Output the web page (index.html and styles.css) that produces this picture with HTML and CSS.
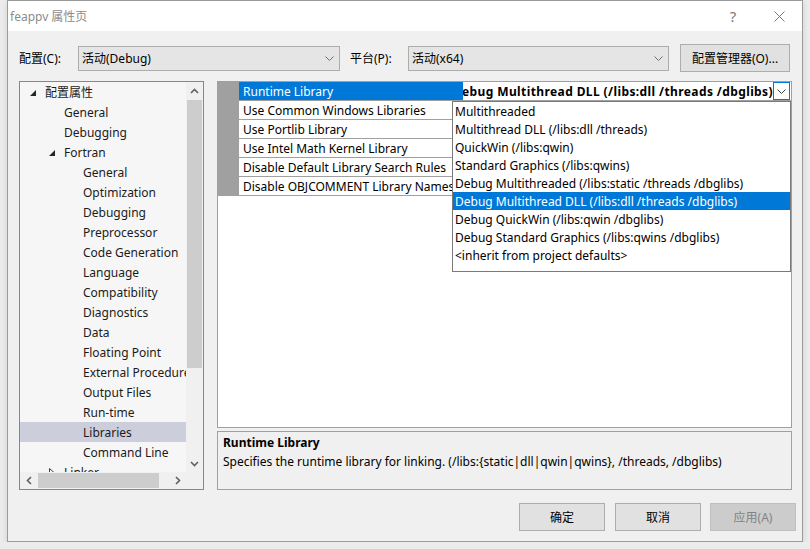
FILE: index.html
```html
<!DOCTYPE html>
<html lang="zh-CN">
<head>
<meta charset="utf-8">
<title>feappv 属性页</title>
<link rel="stylesheet" href="styles.css">
</head>
<body>
<div class="window">
  <div class="titlebar">
    <span class="title">feappv 属性页</span>
    <span class="help">?</span>
    <svg class="close" width="11" height="11" viewBox="0 0 11 11"><path d="M0.5 0.5 L10.5 10.5 M10.5 0.5 L0.5 10.5" stroke="#7a7a7a" stroke-width="1" fill="none"/></svg>
  </div>

  <div class="config-row">
    <span class="lbl lbl-config">配置(C):</span>
    <div class="combo combo-config">
      <span>活动(Debug)</span>
      <svg class="chev" width="9" height="5" viewBox="0 0 9 5"><polyline points="0.5,0.5 4.5,4.5 8.5,0.5" fill="none" stroke="#707070" stroke-width="1"/></svg>
    </div>
    <span class="lbl lbl-platform">平台(P):</span>
    <div class="combo combo-platform">
      <span>活动(x64)</span>
      <svg class="chev" width="9" height="5" viewBox="0 0 9 5"><polyline points="0.5,0.5 4.5,4.5 8.5,0.5" fill="none" stroke="#707070" stroke-width="1"/></svg>
    </div>
    <button class="btn btn-manager">配置管理器(O)...</button>
  </div>

  <div class="main">
    <div class="tree">
      <div class="tree-list">
        <div class="row l0"><span class="exp"><svg class="tri" width="6" height="6" viewBox="0 0 6 6"><polygon points="6,0 6,6 0,6" fill="#262626"/></svg></span><span>配置属性</span></div>
        <div class="row l1"><span class="exp"></span><span>General</span></div>
        <div class="row l1"><span class="exp"></span><span>Debugging</span></div>
        <div class="row l1"><span class="exp"><svg class="tri" width="6" height="6" viewBox="0 0 6 6"><polygon points="6,0 6,6 0,6" fill="#262626"/></svg></span><span>Fortran</span></div>
        <div class="row l2"><span class="exp"></span><span>General</span></div>
        <div class="row l2"><span class="exp"></span><span>Optimization</span></div>
        <div class="row l2"><span class="exp"></span><span>Debugging</span></div>
        <div class="row l2"><span class="exp"></span><span>Preprocessor</span></div>
        <div class="row l2"><span class="exp"></span><span>Code Generation</span></div>
        <div class="row l2"><span class="exp"></span><span>Language</span></div>
        <div class="row l2"><span class="exp"></span><span>Compatibility</span></div>
        <div class="row l2"><span class="exp"></span><span>Diagnostics</span></div>
        <div class="row l2"><span class="exp"></span><span>Data</span></div>
        <div class="row l2"><span class="exp"></span><span>Floating Point</span></div>
        <div class="row l2"><span class="exp"></span><span>External Procedures</span></div>
        <div class="row l2"><span class="exp"></span><span>Output Files</span></div>
        <div class="row l2"><span class="exp"></span><span>Run-time</span></div>
        <div class="row l2 sel"><span class="exp"></span><span>Libraries</span></div>
        <div class="row l2"><span class="exp"></span><span>Command Line</span></div>
        <div class="row l1"><span class="exp"><svg class="tri-c" width="6" height="9" viewBox="0 0 6 9"><polygon points="0.5,0.5 5,4.5 0.5,8.5" fill="none" stroke="#404040" stroke-width="1"/></svg></span><span>Linker</span></div>
      </div>
      <div class="vscroll">
        <div class="sbtn"><svg width="9" height="6" viewBox="0 0 9 6"><polyline points="1,5 4.5,1.5 8,5" fill="none" stroke="#606060" stroke-width="1.6"/></svg></div>
        <div class="vthumb"></div>
        <div class="sfill"></div>
        <div class="sbtn"><svg width="9" height="6" viewBox="0 0 9 6"><polyline points="1,1 4.5,4.5 8,1" fill="none" stroke="#606060" stroke-width="1.6"/></svg></div>
      </div>
      <div class="hscroll">
        <div class="sbtn"><svg width="6" height="9" viewBox="0 0 6 9"><polyline points="5,1 1.5,4.5 5,8" fill="none" stroke="#606060" stroke-width="1.6"/></svg></div>
        <div class="hthumb"></div>
        <div class="sfill"></div>
        <div class="sbtn"><svg width="6" height="9" viewBox="0 0 6 9"><polyline points="1,1 4.5,4.5 1,8" fill="none" stroke="#606060" stroke-width="1.6"/></svg></div>
      </div>
      <div class="corner"></div>
    </div>

    <div class="right">
      <div class="grid">
        <div class="gutter"></div>
        <div class="rows">
          <div class="prow sel">
            <div class="pname">Runtime Library</div>
            <div class="pval">
              <div class="pval-text"><span>Debug Multithread DLL (/libs:dll /threads /dbglibs)</span></div>
              <div class="ddbtn"><svg width="9" height="5" viewBox="0 0 9 5"><polyline points="0.5,0.5 4.5,4.5 8.5,0.5" fill="none" stroke="#404040" stroke-width="1"/></svg></div>
            </div>
          </div>
          <div class="prow"><div class="pname">Use Common Windows Libraries</div><div class="pval"></div></div>
          <div class="prow"><div class="pname">Use Portlib Library</div><div class="pval"></div></div>
          <div class="prow"><div class="pname">Use Intel Math Kernel Library</div><div class="pval"></div></div>
          <div class="prow"><div class="pname">Disable Default Library Search Rules</div><div class="pval"></div></div>
          <div class="prow"><div class="pname">Disable OBJCOMMENT Library Names</div><div class="pval"></div></div>
        </div>
        <div class="dropdown">
          <div class="ditem">Multithreaded</div>
          <div class="ditem">Multithread DLL (/libs:dll /threads)</div>
          <div class="ditem">QuickWin (/libs:qwin)</div>
          <div class="ditem">Standard Graphics (/libs:qwins)</div>
          <div class="ditem">Debug Multithreaded (/libs:static /threads /dbglibs)</div>
          <div class="ditem sel">Debug Multithread DLL (/libs:dll /threads /dbglibs)</div>
          <div class="ditem">Debug QuickWin (/libs:qwin /dbglibs)</div>
          <div class="ditem">Debug Standard Graphics (/libs:qwins /dbglibs)</div>
          <div class="ditem">&lt;inherit from project defaults&gt;</div>
        </div>
      </div>
      <div class="desc">
        <div class="desc-title">Runtime Library</div>
        <div class="desc-text">Specifies the runtime library for linking. (/libs:{static|dll|qwin|qwins}, /threads, /dbglibs)</div>
      </div>
    </div>
  </div>

  <div class="buttons">
    <button class="btn btn-ok">确定</button>
    <button class="btn">取消</button>
    <button class="btn disabled">应用(A)</button>
  </div>
</div>
</body>
</html>
```

FILE: styles.css
```css
body {
  margin: 0;
  background: #ececec;
  font-family: "Noto Sans", "Noto Sans CJK SC", sans-serif;
  font-size: 12px;
  color: #000;
}

.window {
  box-sizing: border-box;
  margin-left: 7px;
  width: 796px;
  height: 542px;
  border: 1px solid #9b9b9b;
  background: #f0f0f0;
  display: flex;
  flex-direction: column;
  box-shadow: 0 2px 6px rgba(0, 0, 0, 0.12);
}

/* title bar */
.titlebar {
  flex: none;
  height: 30px;
  background: #fff;
  display: flex;
  align-items: center;
  padding-left: 2px;
  padding-right: 17px;
}
.title {
  color: #8c8c8c;
  margin-top: -1px;
}
.help {
  margin-left: auto;
  margin-right: 37px;
  color: #7a7a7a;
  font-size: 15px;
  width: 8px;
  text-align: center;
  margin-top: -1px;
}
.close {
  display: block;
}

/* configuration row */
.config-row {
  flex: none;
  display: flex;
  align-items: center;
  height: 28px;
  margin-top: 13px;
  padding-left: 11px;
}
.lbl-config { width: 59px; }
.lbl-platform { width: 58px; }
.combo {
  box-sizing: border-box;
  height: 25px;
  border: 1px solid #adadad;
  background: #e5e5e5;
  display: flex;
  align-items: center;
  justify-content: space-between;
  padding: 0 5px 0 3px;
}
.combo-config { width: 262px; margin-right: 10px; }
.combo-platform { width: 261px; margin-right: 11px; }
.chev { display: block; }

.btn {
  box-sizing: border-box;
  height: 28px;
  width: 86px;
  border: 1px solid #adadad;
  background: #e1e1e1;
  font-family: inherit;
  font-size: 12px;
  color: #000;
  padding: 0;
}
.btn-manager { width: 110px; }
.btn.disabled {
  background: #cccccc;
  border-color: #bfbfbf;
  color: #838383;
}

/* main area */
.main {
  flex: none;
  display: flex;
  height: 409px;
  margin-top: 9px;
  padding-left: 11px;
  gap: 13px;
}

.tree {
  box-sizing: border-box;
  width: 185px;
  height: 409px;
  border: 1px solid #828790;
  display: grid;
  grid-template-columns: 166px 17px;
  grid-template-rows: 390px 17px;
}
.tree-list {
  background: #f6f6f6;
  overflow: hidden;
  color: #1b1b1b;
}
.row {
  height: 20px;
  display: flex;
  align-items: center;
  white-space: nowrap;
}
.row.sel { background: #cccedb; }
.l0 { padding-left: 10px; }
.l1 { padding-left: 29px; }
.l2 { padding-left: 48px; }
.exp {
  width: 15px;
  flex: none;
  display: flex;
  align-items: center;
}
.tri { display: block; margin-top: 2px; }
.tri-c { display: block; }

.vscroll {
  background: #f0f0f0;
  display: flex;
  flex-direction: column;
}
.hscroll {
  background: #f0f0f0;
  display: flex;
}
.corner { background: #f0f0f0; }
.sbtn {
  flex: none;
  width: 17px;
  height: 17px;
  display: flex;
  align-items: center;
  justify-content: center;
}
.sbtn svg { display: block; }
.sfill { flex: 1; }
.vthumb {
  flex: none;
  height: 268px;
  margin: 1px 1px 0 1px;
  background: #cdcdcd;
}
.hthumb {
  flex: none;
  width: 121px;
  margin: 1px 0 1px 1px;
  background: #cdcdcd;
}

/* right column */
.right {
  width: 575px;
  display: flex;
  flex-direction: column;
  gap: 3px;
}
.grid {
  position: relative;
  box-sizing: border-box;
  height: 347px;
  border: 1px solid #a0a0a0;
  background: #fff;
  display: flex;
  align-items: flex-start;
}
.gutter {
  flex: none;
  width: 21px;
  height: 114px;
  background: #a0a0a0;
}
.rows {
  flex: 1;
  min-width: 0;
}
.prow {
  display: flex;
  height: 18px;
  border-bottom: 1px solid #a0a0a0;
}
.pname {
  box-sizing: border-box;
  width: 224px;
  flex: none;
  padding-left: 4px;
  overflow: hidden;
  white-space: nowrap;
  line-height: 20px;
}
.prow.sel .pname {
  background: #0078d7;
  color: #fff;
}
.pval {
  flex: 1;
  min-width: 0;
  display: flex;
}
.pval-text {
  flex: 1;
  min-width: 0;
  overflow: hidden;
  display: flex;
  justify-content: flex-end;
  font-weight: 700;
  letter-spacing: 0.4px;
  line-height: 20px;
  white-space: nowrap;
}
.pval-text span { flex: none; }
.ddbtn {
  flex: none;
  box-sizing: border-box;
  width: 17px;
  height: 18px;
  margin-right: 1px;
  border: 1px solid #0078d7;
  background: #fff;
  display: flex;
  align-items: center;
  justify-content: center;
}
.ddbtn svg { display: block; }

.dropdown {
  position: absolute;
  left: 234px;
  top: 19px;
  box-sizing: border-box;
  width: 339px;
  height: 171px;
  border: 1px solid #7a7a7a;
  background: #fff;
}
.ditem {
  height: 18px;
  line-height: 20px;
  overflow: hidden;
  padding-left: 2px;
  white-space: nowrap;
}
.ditem.sel {
  background: #0078d7;
  color: #fff;
}

.desc {
  box-sizing: border-box;
  height: 59px;
  border: 1px solid #a0a0a0;
  background: #f0f0f0;
  padding: 1px 0 0 5px;
  line-height: 19px;
}
.desc-title { font-weight: 700; }

/* bottom buttons */
.buttons {
  flex: none;
  display: flex;
  justify-content: flex-end;
  gap: 9px;
  margin-top: 13px;
  padding-right: 6px;
  height: 28px;
}
.btn-ok { margin-right: 1px; }
```
